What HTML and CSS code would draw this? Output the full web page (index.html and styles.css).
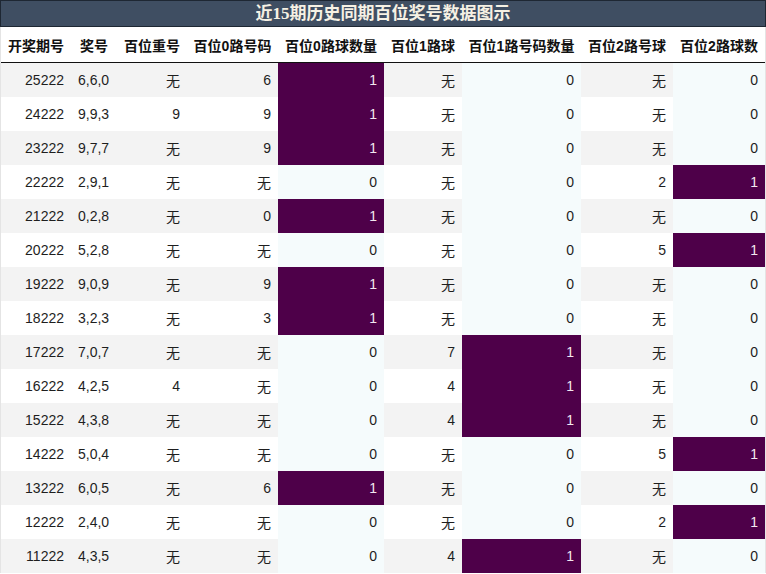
FILE: index.html
```html
<!DOCTYPE html>
<html lang="zh">
<head>
<meta charset="utf-8">
<title>近15期历史同期百位奖号数据图示</title>
<link rel="stylesheet" href="styles.css">
</head>
<body>
<div class="chart">
  <div class="title">近15期历史同期百位奖号数据图示</div>
  <div class="wrap">
  <table class="grid">
    <colgroup>
      <col class="c1"><col class="c2"><col class="c3"><col class="c4"><col class="c5"><col class="c6"><col class="c7"><col class="c8"><col class="c9">
    </colgroup>
    <thead>
      <tr><th>开奖期号</th><th>奖号</th><th>百位重号</th><th>百位0路号码</th><th>百位0路球数量</th><th>百位1路球</th><th>百位1路号码数量</th><th>百位2路号球</th><th>百位2路球数</th></tr>
    </thead>
    <tbody>
      <tr><td>25222</td><td class="l">6,6,0</td><td>无</td><td>6</td><td class="cnt on">1</td><td>无</td><td class="cnt">0</td><td>无</td><td class="cnt">0</td></tr>
      <tr><td>24222</td><td class="l">9,9,3</td><td>9</td><td>9</td><td class="cnt on">1</td><td>无</td><td class="cnt">0</td><td>无</td><td class="cnt">0</td></tr>
      <tr><td>23222</td><td class="l">9,7,7</td><td>无</td><td>9</td><td class="cnt on">1</td><td>无</td><td class="cnt">0</td><td>无</td><td class="cnt">0</td></tr>
      <tr><td>22222</td><td class="l">2,9,1</td><td>无</td><td>无</td><td class="cnt">0</td><td>无</td><td class="cnt">0</td><td>2</td><td class="cnt on">1</td></tr>
      <tr><td>21222</td><td class="l">0,2,8</td><td>无</td><td>0</td><td class="cnt on">1</td><td>无</td><td class="cnt">0</td><td>无</td><td class="cnt">0</td></tr>
      <tr><td>20222</td><td class="l">5,2,8</td><td>无</td><td>无</td><td class="cnt">0</td><td>无</td><td class="cnt">0</td><td>5</td><td class="cnt on">1</td></tr>
      <tr><td>19222</td><td class="l">9,0,9</td><td>无</td><td>9</td><td class="cnt on">1</td><td>无</td><td class="cnt">0</td><td>无</td><td class="cnt">0</td></tr>
      <tr><td>18222</td><td class="l">3,2,3</td><td>无</td><td>3</td><td class="cnt on">1</td><td>无</td><td class="cnt">0</td><td>无</td><td class="cnt">0</td></tr>
      <tr><td>17222</td><td class="l">7,0,7</td><td>无</td><td>无</td><td class="cnt">0</td><td>7</td><td class="cnt on">1</td><td>无</td><td class="cnt">0</td></tr>
      <tr><td>16222</td><td class="l">4,2,5</td><td>4</td><td>无</td><td class="cnt">0</td><td>4</td><td class="cnt on">1</td><td>无</td><td class="cnt">0</td></tr>
      <tr><td>15222</td><td class="l">4,3,8</td><td>无</td><td>无</td><td class="cnt">0</td><td>4</td><td class="cnt on">1</td><td>无</td><td class="cnt">0</td></tr>
      <tr><td>14222</td><td class="l">5,0,4</td><td>无</td><td>无</td><td class="cnt">0</td><td>无</td><td class="cnt">0</td><td>5</td><td class="cnt on">1</td></tr>
      <tr><td>13222</td><td class="l">6,0,5</td><td>无</td><td>6</td><td class="cnt on">1</td><td>无</td><td class="cnt">0</td><td>无</td><td class="cnt">0</td></tr>
      <tr><td>12222</td><td class="l">2,4,0</td><td>无</td><td>无</td><td class="cnt">0</td><td>无</td><td class="cnt">0</td><td>2</td><td class="cnt on">1</td></tr>
      <tr><td>11222</td><td class="l">4,3,5</td><td>无</td><td>无</td><td class="cnt">0</td><td>4</td><td class="cnt on">1</td><td>无</td><td class="cnt">0</td></tr>
    </tbody>
  </table>
  </div>
</div>
</body>
</html>
```

FILE: styles.css
```css
html, body {
  margin: 0;
  padding: 0;
  background: #ffffff;
}
.chart {
  width: 766px;
  height: 574px;
  overflow: hidden;
}
.title {
  height: 25px;
  line-height: 25px;
  border: 1px solid #1e2733;
  background: #3f4e62;
  color: #f6f1e4;
  font-family: "Liberation Serif", "Noto Sans CJK SC", serif;
  font-weight: bold;
  font-size: 17px;
  text-align: center;
}
.wrap {
  border-left: 1px solid #e4e4e4;
  border-right: 1px solid #e4e4e4;
}
.grid {
  width: 764px;
  table-layout: fixed;
  border-collapse: collapse;
  border-spacing: 0;
  font-family: "Liberation Sans", "Noto Sans CJK SC", sans-serif;
  font-size: 14px;
  color: #1e1e1e;
}
.c1 { width: 70px; }
.c2 { width: 46px; }
.c3 { width: 70px; }
.c4 { width: 91px; }
.c5 { width: 106px; }
.c6 { width: 78px; }
.c7 { width: 119px; }
.c8 { width: 92px; }
.c9 { width: 92px; }
.grid th {
  height: 35px;
  padding: 0;
  font-family: "Liberation Sans", "Noto Sans CJK SC", sans-serif;
  font-weight: bold;
  font-size: 14px;
  color: #111111;
  text-align: center;
  white-space: nowrap;
  border-bottom: 1px solid #111111;
  background: #ffffff;
}
.grid td {
  height: 34px;
  padding: 0 7px 0 0;
  text-align: right;
  white-space: nowrap;
}
.grid td.l {
  text-align: left;
  padding: 0 0 0 7px;
}
.grid tbody tr:nth-child(odd) td { background: #f3f3f3; }
.grid tbody tr:nth-child(even) td { background: #ffffff; }
.grid tbody tr td.cnt { background: #f5fbfc; }
.grid tbody tr td.cnt.on {
  background: #4e0049;
  color: #f2e8f0;
}
```
